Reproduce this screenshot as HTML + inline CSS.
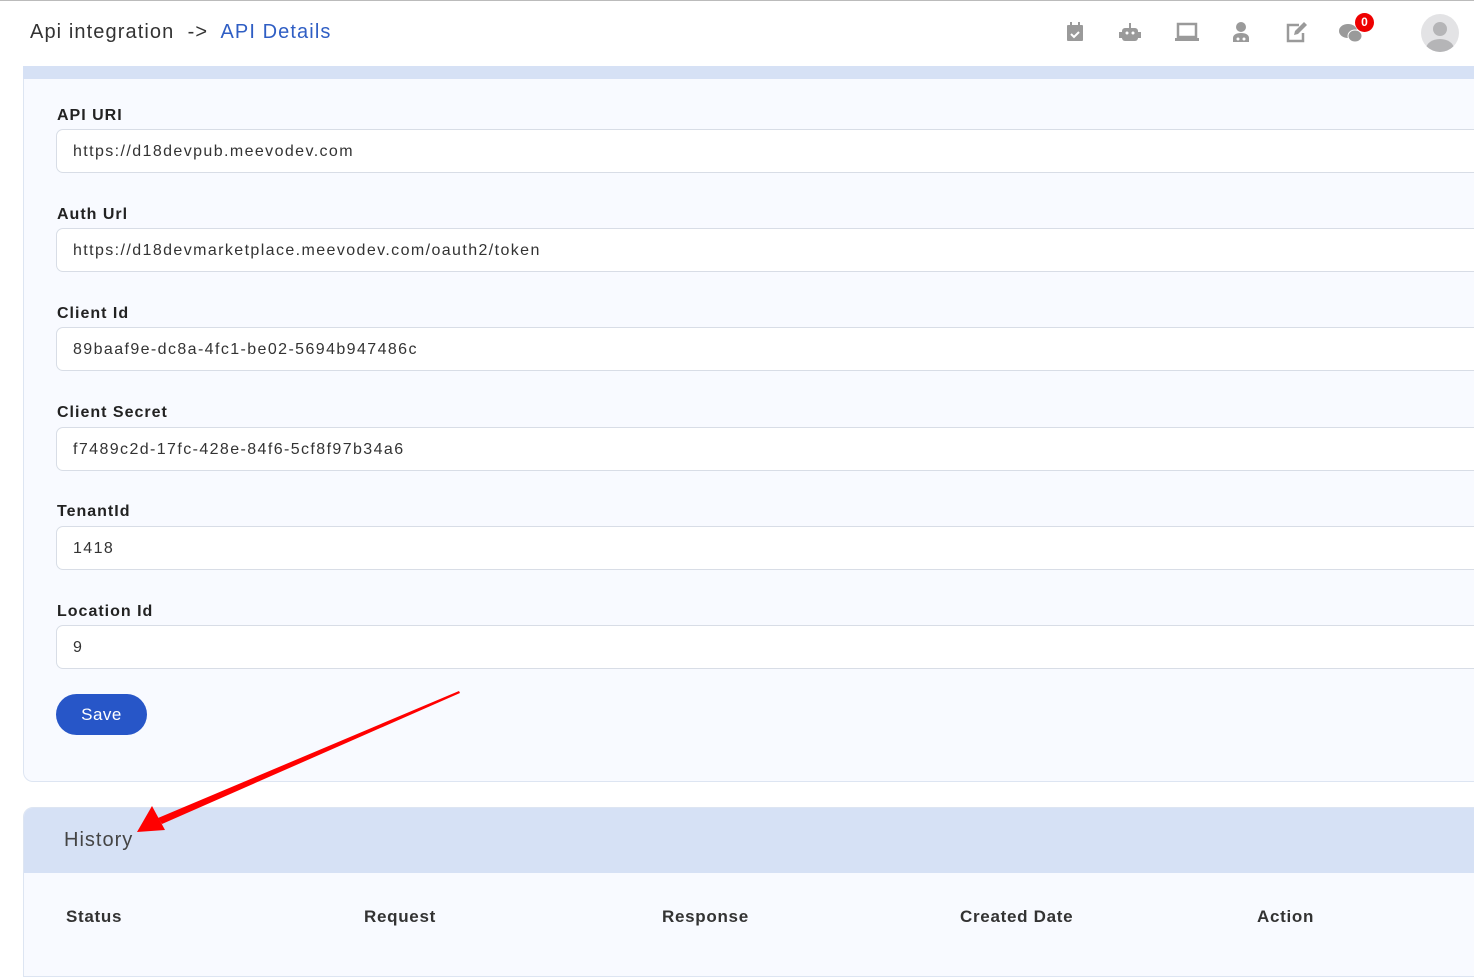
<!DOCTYPE html>
<html><head><style>
*{box-sizing:border-box;margin:0;padding:0}
body{width:1474px;height:967px;overflow:hidden;background:#fff;font-family:"Liberation Sans",sans-serif;position:relative}
.top{position:absolute;left:0;top:0;width:1474px;height:1px;background:#bbb}
.crumb{position:absolute;left:30px;top:21px;font-size:20px;color:#333;letter-spacing:1.1px}
.crumb span{color:#2f5ec4}
.ic{position:absolute;top:21px;width:22px;height:22px}
.card{position:absolute;left:23px;top:66px;width:1460px;height:716px;background:#f8faff;border:1px solid #dde5f2;border-top:none;border-radius:0 0 10px 10px}
.band{position:absolute;left:23px;top:66px;width:1451px;height:13px;background:#d6e1f5}
.lbl{position:absolute;left:57px;font-size:16px;font-weight:bold;color:#222;letter-spacing:1px}
.inp{position:absolute;left:56px;width:1430px;height:44px;background:#fff;border:1px solid #d8dde6;border-radius:7px;font-size:16px;color:#333;padding:13px 0 0 16px;letter-spacing:1.4px}
.save{position:absolute;left:56px;top:694px;width:91px;height:41px;border-radius:21px;background:#2756c8;color:#fff;font-size:17px;text-align:center;line-height:41px;letter-spacing:.5px}
.hist{position:absolute;left:23px;top:807px;width:1460px;height:170px;background:#f8faff;border:1px solid #dde5f2;border-radius:10px 0 0 0;overflow:hidden}
.hh{height:65px;background:#d6e1f5;font-size:20px;color:#444;padding:21px 0 0 40px;letter-spacing:1px}
.th{position:absolute;top:907px;font-size:17px;font-weight:bold;color:#333;letter-spacing:.7px}
</style></head><body>
<div class="top"></div>
<div class="crumb">Api integration &nbsp;-&gt;&nbsp; <span>API Details</span></div>
<svg class="ic" style="left:1064px" viewBox="0 0 22 22"><rect x="3" y="4" width="16" height="16" rx="1" fill="#9a9a9a"/><rect x="6" y="1" width="2" height="5" fill="#9a9a9a"/><rect x="14" y="1" width="2" height="5" fill="#9a9a9a"/><path d="M7 13l3 3 5-5" stroke="#fff" stroke-width="2" fill="none"/></svg>
<svg class="ic" style="left:1119px" viewBox="0 0 22 22"><rect x="3" y="7" width="16" height="13" rx="3" fill="#9a9a9a"/><rect x="10" y="2" width="2" height="5" fill="#9a9a9a"/><rect x="0" y="11" width="3" height="6" fill="#9a9a9a"/><rect x="19" y="11" width="3" height="6" fill="#9a9a9a"/><circle cx="8" cy="12" r="1.5" fill="#fff"/><circle cx="14" cy="12" r="1.5" fill="#fff"/></svg>
<svg class="ic" style="left:1174px;width:26px" viewBox="0 0 26 22"><rect x="4" y="3" width="18" height="13" fill="none" stroke="#9a9a9a" stroke-width="2.5"/><rect x="1" y="17" width="24" height="3" fill="#9a9a9a"/></svg>
<svg class="ic" style="left:1230px" viewBox="0 0 22 22"><circle cx="11" cy="6" r="5" fill="#9a9a9a"/><path d="M3 21v-4c0-3 3-5 8-5s8 2 8 5v4z" fill="#9a9a9a"/><circle cx="8" cy="18" r="1.5" fill="#fff"/><circle cx="14" cy="18" r="1.5" fill="#fff"/></svg>
<svg class="ic" style="left:1285px" viewBox="0 0 22 22"><path d="M14 4H3v16h15v-8" fill="none" stroke="#9a9a9a" stroke-width="2.5"/><path d="M9 14l1-4 9-9 3 3-9 9z" fill="#9a9a9a"/></svg>
<svg class="ic" style="left:1339px;width:24px" viewBox="0 0 24 22"><ellipse cx="9" cy="10" rx="9" ry="7" fill="#9a9a9a"/><ellipse cx="16" cy="15" rx="7" ry="6" fill="#9a9a9a" stroke="#fff" stroke-width="1"/></svg>
<div style="position:absolute;left:1355px;top:13px;width:19px;height:19px;border-radius:50%;background:#e00;color:#fff;font-size:12px;font-weight:bold;text-align:center;line-height:19px">0</div>
<svg style="position:absolute;left:1421px;top:14px" width="38" height="38" viewBox="0 0 38 38"><defs><clipPath id="c"><circle cx="19" cy="19" r="19"/></clipPath></defs><circle cx="19" cy="19" r="19" fill="#e3e3e5"/><g clip-path="url(#c)" fill="#b5b5b7"><circle cx="19" cy="15" r="7"/><ellipse cx="19" cy="35" rx="14" ry="10"/></g></svg>
<div class="card"></div><div class="band"></div>
<div class="lbl" style="top:107px">API URI</div><div class="inp" style="top:129px">https://d18devpub.meevodev.com</div>
<div class="lbl" style="top:206px">Auth Url</div><div class="inp" style="top:228px">https://d18devmarketplace.meevodev.com/oauth2/token</div>
<div class="lbl" style="top:305px">Client Id</div><div class="inp" style="top:327px">89baaf9e-dc8a-4fc1-be02-5694b947486c</div>
<div class="lbl" style="top:404px">Client Secret</div><div class="inp" style="top:427px">f7489c2d-17fc-428e-84f6-5cf8f97b34a6</div>
<div class="lbl" style="top:503px">TenantId</div><div class="inp" style="top:526px">1418</div>
<div class="lbl" style="top:603px">Location Id</div><div class="inp" style="top:625px">9</div>
<div class="save">Save</div>
<div class="hist"><div class="hh">History</div></div>
<div class="th" style="left:66px">Status</div><div class="th" style="left:364px">Request</div><div class="th" style="left:662px">Response</div><div class="th" style="left:960px">Created Date</div><div class="th" style="left:1257px">Action</div>
<svg style="position:absolute;left:0;top:0" width="1474" height="967"><polygon points="459,691 460,693 162,824 158,818" fill="#f00"/><polygon points="137,832 152,806 165,830" fill="#f00"/></svg>
</body></html>
